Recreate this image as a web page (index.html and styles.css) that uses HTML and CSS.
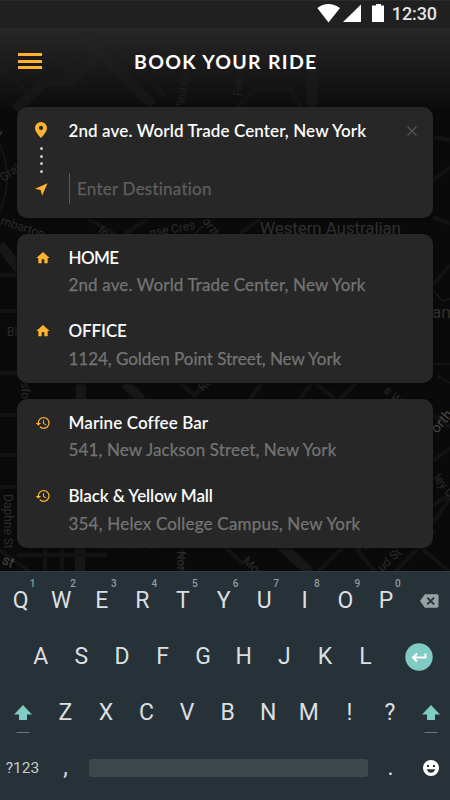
FILE: index.html
```html
<!DOCTYPE html>
<html lang="en">
<head>
<meta charset="utf-8">
<title>Book your ride</title>
<link rel="stylesheet" href="styles.css">
</head>
<body>
<svg class="defs" aria-hidden="true">
  <symbol id="home" viewBox="0 0 24 24"><path d="M10 20v-6h4v6h5v-8h3L12 3 2 12h3v8z"/></symbol>
  <symbol id="history" viewBox="0 0 24 24"><path d="M13 3a9 9 0 0 0-9 9H1l3.89 3.89.07.14L9 12H6c0-3.87 3.13-7 7-7s7 3.13 7 7-3.13 7-7 7c-1.93 0-3.68-.79-4.94-2.06l-1.42 1.42A8.95 8.95 0 0 0 13 21a9 9 0 0 0 0-18zm-1 5v5l4.28 2.54.72-1.21-3.5-2.08V8z"/></symbol>
  <symbol id="shift" viewBox="0 0 18 28"><path class="mint" d="M9 0 18 9.500h-5V15H5V9.500H0z"/><path class="pale" d="M2.500 27.500h13v1.500h-13z"/></symbol>
</svg>
<main class="phone">
  <svg class="map" viewBox="0 0 450 572" aria-hidden="true">
    <g class="roads">
      <path class="wide" d="M15 110 45 82H70L100 52M85 38 153 105M312 28V107M0 245 20 270M81 383V400M125 383 142 400M80 548V572M280 545 310 572"/>
      <path d="M0 65 35 100M60 60 85 85M125 55 165 95M238 107l18-18h35l10 18M433 137l17 3M433 180l17-13M433 217l17 7M0 275h17M0 311h17M0 373h17M0 415h17M0 455h17M0 487h17M0 550 30 572M17 555h90M45 548v24M62 548v24M182 548v24M85 217l30 17M150 217l-25 17M240 234l22-17M433 285l17-20M433 415l17 12M433 505l17-10M250 399l12-16M300 399l12-16M315 383l20 16M340 399l16-16M180 383l15 12 12-12M225 547l18 17M318 572l25-25M355 547l20 25M395 572l40-42M433 523l17-25M420 547l30 25M433 461l17-13"/>
      <path class="thin" d="M0 145q14 34 0 65M433 290l10 11 7-2M433 364h17M438 376l12 7M195 234q10-12 24-17"/>
    </g>
    <g class="labels">
      <text class="big" x="260" y="234" textLength="141">Western Australian</text>
      <text transform="translate(183 116) rotate(-83)" x="5">Pinaster</text>
      <text transform="translate(242 96) rotate(-88)">Freedom Rd</text>
      <text class="faint" x="125" y="36">Sapota</text>
      <text transform="translate(3 182) rotate(-34)">Graham</text>
      <text transform="translate(0 224) rotate(18)">mbarton</text>
      <text transform="translate(97 232) rotate(40)">Ingle</text>
      <text transform="translate(150 237) rotate(-10)">nse Cres</text>
      <text transform="translate(202 221) rotate(55)">orth St</text>
      <text x="7" y="336">Bl</text>
      <text transform="translate(21 382) rotate(88)">sfo</text>
      <text transform="translate(203 392) rotate(-45)">Ro</text>
      <text class="big" x="432" y="318">am</text>
      <text transform="translate(383 391) rotate(45)">s W</text>
      <text class="bright" transform="translate(437 434) rotate(-50)">orth</text>
      <text transform="translate(433 478) rotate(52)">ley Cr</text>
      <text transform="translate(4 494) rotate(90)">Daphne St</text>
      <text class="bright" transform="translate(1 563) rotate(25)">st</text>
      <text x="96" y="549">Marmion St</text>
      <text transform="translate(177 551) rotate(90)">Nor</text>
      <text transform="translate(242 562) rotate(43)">Mon</text>
      <text transform="translate(356 551) rotate(-7)">Vale St</text>
      <text transform="translate(382 572) rotate(-43)">ud St</text>
      <text class="bright" transform="translate(-1 137) rotate(-55)">e</text>
    </g>
  </svg>

  <header class="statusbar">
    <svg class="signals" viewBox="0 0 68 20">
      <path d="M.3 4Q11-4 23 4L11.500 18.500zM44 .5V18H26zM55 1.500h4V0h5v1.500h3V18H55z"/>
    </svg>
    <span class="time">12:30</span>
  </header>

  <nav class="topbar">
    <div class="menu"><i></i><i></i><i></i></div>
    <h1>BOOK YOUR RIDE</h1>
  </nav>

  <section class="cards">
    <div class="card route">
      <div class="track">
        <svg class="pin" viewBox="0 0 12 16"><path fill-rule="evenodd" d="M6 0a6 6 0 0 0-6 6c0 4.300 6 10 6 10s6-5.700 6-10a6 6 0 0 0-6-6zm0 3.800A2.100 2.100 0 1 1 6 8a2.100 2.100 0 0 1 0-4.200z"/></svg>
        <div class="dots"><i></i><i></i><i></i><i></i></div>
        <svg class="arrow" viewBox="0 0 14 14"><path d="M13.500.3 7.600 13.700 6.100 7.600 0 6.200z"/></svg>
      </div>
      <div class="fields">
        <div class="from"><span class="title address">2nd ave. World Trade Center, New York</span>
          <svg class="close" viewBox="0 0 10 10"><path d="M.5.5l9 9M9.500.5l-9 9"/></svg></div>
        <div class="to">Enter Destination</div>
      </div>
    </div>

    <div class="card">
      <div class="place">
        <svg class="icon"><use href="#home"/></svg>
        <div><div class="title caps">HOME</div><div class="sub">2nd ave. World Trade Center, New York</div></div>
      </div>
      <div class="place">
        <svg class="icon"><use href="#home"/></svg>
        <div><div class="title office">OFFICE</div><div class="sub snug">1124, Golden Point Street, New York</div></div>
      </div>
    </div>

    <div class="card">
      <div class="place">
        <svg class="icon recent"><use href="#history"/></svg>
        <div><div class="title">Marine Coffee Bar</div><div class="sub">541, New Jackson Street, New York</div></div>
      </div>
      <div class="place">
        <svg class="icon recent"><use href="#history"/></svg>
        <div><div class="title office">Black &amp; Yellow Mall</div><div class="sub loose">354, Helex College Campus, New York</div></div>
      </div>
    </div>
  </section>

  <section class="keyboard">
    <div class="keys top">
      <span>Q<sup>1</sup></span><span>W<sup>2</sup></span><span>E<sup>3</sup></span><span>R<sup>4</sup></span><span>T<sup>5</sup></span><span>Y<sup>6</sup></span><span>U<sup>7</sup></span><span>I<sup>8</sup></span><span>O<sup>9</sup></span><span>P<sup>0</sup></span>
      <svg class="backspace" viewBox="0 0 19 14"><path class="shape" d="M5 0h12.500Q19 0 19 1.500v11q0 1.500-1.500 1.500H5L0 7z"/><path class="cross" d="m7.500 3.500 7 7m0-7-7 7"/></svg>
    </div>
    <div class="keys middle">
      <span>A</span><span>S</span><span>D</span><span>F</span><span>G</span><span>H</span><span>J</span><span>K</span><span>L</span>
      <svg class="enter" viewBox="0 0 28 28"><circle cx="14" cy="14" r="13.700"/><path d="M20.500 10.500v4H8m4-4-4 4 4 4"/></svg>
    </div>
    <div class="keys bottom">
      <svg class="shift"><use href="#shift"/></svg>
      <span>Z</span><span>X</span><span>C</span><span>V</span><span>B</span><span>N</span><span>M</span><span>!</span><span>?</span>
      <svg class="shift right"><use href="#shift"/></svg>
    </div>
    <div class="keys last">
      <span class="num">?123</span><span>,</span><span class="space"></span><span>.</span>
      <svg class="smile" viewBox="0 0 16 16"><circle cx="8" cy="8" r="8"/><path d="M4 5h2v2H4zM10 5h2v2h-2zM3.700 9.300h8.600Q11 12.800 8 12.800T3.700 9.300z"/></svg>
    </div>
  </section>
</main>
</body>
</html>
```
FILE: styles.css
```css
* { box-sizing: border-box; }
body { margin: 0; background: #0a0a0a; font-family: Lato, "Liberation Sans", sans-serif; }
svg { display: block; overflow: visible; }
.defs { position: absolute; width: 0; height: 0; }

.phone { position: relative; isolation: isolate; width: 450px; height: 800px; overflow: hidden; display: flex; flex-direction: column; }

.map { position: absolute; z-index: -1; top: 0; left: 0; width: 450px; height: 572px; }
.roads { fill: none; stroke: #131313; stroke-width: 4; }
.roads .wide { stroke: #171717; stroke-width: 10; }
.roads .thin { stroke: #181818; stroke-width: 1.5; }
.labels { fill: #2b2b2b; font: 12px Roboto, sans-serif; }
.labels .big { font-size: 17px; fill: #303030; }
.labels .bright { fill: #484848; font-size: 14px; }
.labels .faint { fill: #202020; }

.statusbar { height: 28px; flex: none; background: #202020; border-top: 1px solid #2b2b2b; display: flex; justify-content: flex-end; align-items: flex-start; padding: 3px 13px 0 0; gap: 9px; }
.signals { width: 68px; height: 20px; fill: #fff; margin-right: -2.5px; }
.time { font: 500 18px/20px Roboto, sans-serif; color: #e4e4e4; letter-spacing: -.1px; }

.topbar { height: 79px; flex: none; display: flex; align-items: flex-start; padding: 23px 0 0 18px; background: linear-gradient(rgba(39,39,39,.97), rgba(26,26,26,.8) 60%, rgba(16,16,16,.4)); }
.menu { display: grid; gap: 3.500px; width: 116px; padding-top: 2px; }
.menu i { width: 24px; height: 3px; background: #ffb32e; }
.topbar h1 { margin: 0; font: bold 19.500px/21px Lato, sans-serif; letter-spacing: 1.3px; color: #fff; white-space: nowrap; }

.cards { display: grid; gap: 16.500px; padding: 0 16.500px; height: 464px; align-content: start; }
.card { width: 416.500px; height: 148.500px; background: #272727; border-radius: 10px; padding: 9.500px 20px 0 18px; display: grid; gap: 18.500px; align-content: start; box-shadow: 0 1px 3px #080808; white-space: nowrap; }
.title { font-size: 17px; line-height: 27.500px; font-weight: 600; color: #fbfbfb; letter-spacing: .1px; }
.title.caps { letter-spacing: -.6px; }
.title.office { letter-spacing: -.1px; }
.sub { font-size: 17px; line-height: 27px; padding-bottom: .5px; color: #747474; letter-spacing: .13px; -webkit-text-stroke: .25px #747474; }
.sub.snug { letter-spacing: -.03px; }
.sub.loose { letter-spacing: .2px; }
.place { display: grid; grid-template-columns: 34px 1fr; }
.icon { width: 16px; height: 16px; fill: #ffb32e; margin-top: 6px; }

.card.route { height: 110.500px; grid-template-columns: 34px 1fr; gap: 0; padding-top: 10px; }
.track { display: flex; flex-direction: column; align-items: flex-start; fill: #ffb32e; }
.pin { width: 12px; height: 16px; margin: 5px 0 0; }
.dots { display: grid; gap: 4.600px; padding: 9px 0 0 5px; height: 44px; align-content: start; }
.dots i { width: 3px; height: 3px; border-radius: 50%; background: #c7c7c7; }
.arrow { width: 13px; height: 13px; margin-top: 1px; }
.from { display: flex; justify-content: space-between; align-items: center; }
.close { width: 10px; height: 10px; margin-right: -4px; fill: none; stroke: #555; stroke-width: 1.2; }
.to { margin-top: 28.500px; border-left: 1px solid #3f5f78; padding-left: 7.500px; font-size: 17px; line-height: 31px; color: #5f5f5f; letter-spacing: .24px; -webkit-text-stroke: .25px #5f5f5f; }

.keyboard { height: 229px; flex: none; background: #263238; border-top: 1px solid #2e3c43; color: #dcdfe0; font: 23px/28px Roboto, sans-serif; }
.keys { display: grid; align-items: center; justify-items: center; height: 56px; }
.keys > span { position: relative; }
.top { grid-template-columns: repeat(10, 40.600px) 1fr; padding: 0 0 0 .3px; height: 57px; }
.keys sup { position: absolute; left: calc(50% + 8px); top: -8px; width: 8px; text-align: center; font: 500 10px/10px Roboto, sans-serif; color: #929a9d; }
.backspace { width: 18.500px; height: 14px; margin-left: 2px; }
.shape { fill: #9aa1a4; }
.cross { stroke: #263238; stroke-width: 2; }
.middle { grid-template-columns: repeat(9, 40.600px) 1fr; padding: 0 0 0 20.500px; height: 56px; }
.enter { width: 28px; height: 28px; fill: #80cbc4; margin-left: 2px; }
.enter path { fill: none; stroke: #fff; stroke-width: 2; }
.bottom { grid-template-columns: 45px repeat(9, 40.600px) 1fr; }
.shift { width: 18px; height: 28px; margin-top: 12px; }
.shift.right { margin-left: 2px; }
.mint { fill: #80cbc4; }
.pale { fill: #b7bcbe; }
.last { grid-template-columns: 45px 41px 284px 41px 1fr; padding-bottom: 2px; }
.last .num { font-size: 15.500px; line-height: 20px; color: #c5c9cb; }
.space { width: 279px; height: 18px; border-radius: 3px; background: #3c474c; }
.smile { width: 16px; height: 16px; fill: #fff; margin-left: 1px; }
.smile path { fill: #263238; }
```
